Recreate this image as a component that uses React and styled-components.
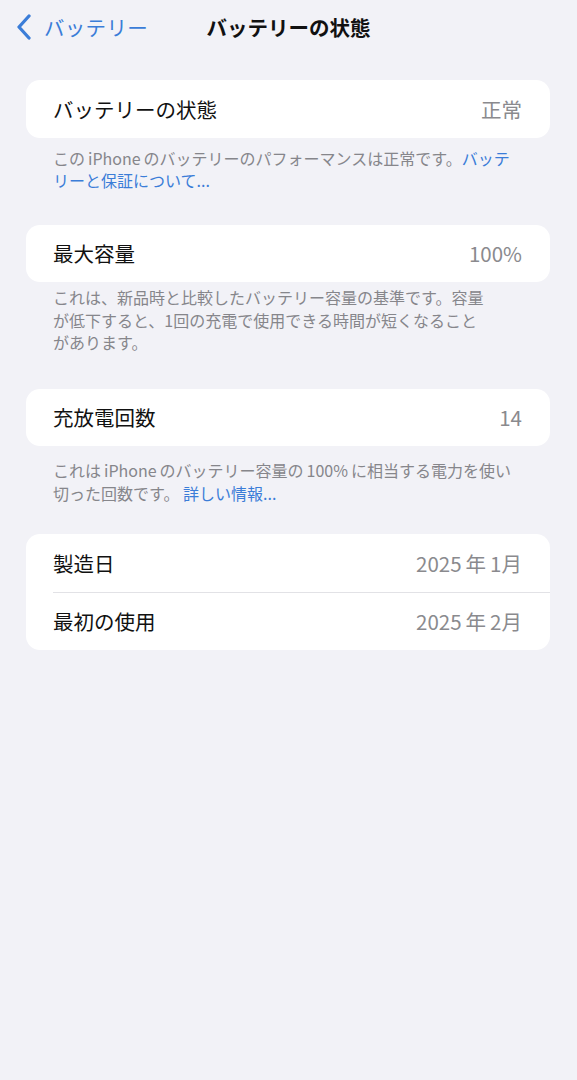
import React from 'react'
import styled, {createGlobalStyle} from 'styled-components'

const GlobalStyles = createGlobalStyle`
  html, body {
    margin: 0;
    padding: 0;
    background: #f2f2f7;
  }
  body {
    font-family: "Noto Sans CJK JP", "Noto Sans", sans-serif;
    -webkit-font-smoothing: antialiased;
  }
`

const Screen = styled.div`
  width: 577px;
  min-height: 1080px;
  background: #f2f2f7;
`

const NavBar = styled.header`
  height: 54px;
  display: grid;
  grid-template-columns: 1fr auto 1fr;
  align-items: center;
`

const BackButton = styled.button`
  display: flex;
  align-items: center;
  gap: 12px;
  padding: 0 0 0 16px;
  border: none;
  background: none;
  color: #3b7dd8;
  font-family: inherit;
  font-size: 20.5px;
  letter-spacing: 0.3px;
  justify-self: start;
`

const Title = styled.h1`
  margin: 0;
  font-size: 20.5px;
  font-weight: 700;
  color: #111;
`

const Content = styled.main`
  padding: 26px 27px 0 26px;
`

const Section = styled.section`
  margin-bottom: ${p => p.$space || 0}px;
`

const Card = styled.div`
  background: #fff;
  border-radius: 14px;
  overflow: hidden;
`

const Row = styled.div`
  height: 57.5px;
  display: flex;
  align-items: center;
  justify-content: space-between;
  padding: 0 28px 0 27px;
  font-size: 20.5px;
  & + & {
    border-top: 1px solid #e2e2e6;
    margin-left: 27px;
    padding-left: 0;
  }
`

const Label = styled.span`
  color: #111;
`

const Value = styled.span`
  color: #8a8a8e;
`

// iOS puts a little air between latin runs and kana/kanji
const Gap = styled.span`
  margin: 0 ${p => p.$m || 3}px;
`

const Footer = styled.p`
  margin: ${p => p.$top || 10}px 0 0;
  padding: 0 20px 0 27px;
  font-size: 16px;
  line-height: 22.5px;
  color: #86868b;
`

const Link = styled.a`
  color: #3b7dd8;
  text-decoration: none;
`

function Chevron() {
  return (
    <svg width="16" height="26" viewBox="0 0 16 26">
      <polyline points="13,2 3,13 13,24" fill="none" stroke="#3b7dd8" strokeWidth="3.3" strokeLinecap="round" strokeLinejoin="round"/>
    </svg>
  )
}

export default function App() {
  return (
    <Screen>
      <GlobalStyles/>
      <NavBar>
        <BackButton>
          <Chevron/>
          <span>バッテリー</span>
        </BackButton>
        <Title>バッテリーの状態</Title>
        <div/>
      </NavBar>
      <Content>
        <Section $space={33}>
          <Card>
            <Row><Label>バッテリーの状態</Label><Value>正常</Value></Row>
          </Card>
          <Footer $top={9}>
            この<Gap>iPhone</Gap>のバッテリーのパフォーマンスは正常です。<Link>バッテ<br/>リーと保証について...</Link>
          </Footer>
        </Section>
        <Section $space={35}>
          <Card>
            <Row><Label>最大容量</Label><Value>100%</Value></Row>
          </Card>
          <Footer $top={4}>
            これは、新品時と比較したバッテリー容量の基準です。容量<br/>
            が低下すると、1回の充電で使用できる時間が短くなること<br/>
            があります。
          </Footer>
        </Section>
        <Section $space={30}>
          <Card>
            <Row><Label>充放電回数</Label><Value>14</Value></Row>
          </Card>
          <Footer $top={13}>
            これは<Gap>iPhone</Gap>のバッテリー容量の<Gap>100%</Gap>に相当する電力を使い<br/>
            切った回数です。 <Link>詳しい情報...</Link>
          </Footer>
        </Section>
        <Section>
          <Card>
            <Row><Label>製造日</Label><Value>2025<Gap $m={4}>年</Gap>1月</Value></Row>
            <Row><Label>最初の使用</Label><Value>2025<Gap $m={4}>年</Gap>2月</Value></Row>
          </Card>
        </Section>
      </Content>
    </Screen>
  )
}
